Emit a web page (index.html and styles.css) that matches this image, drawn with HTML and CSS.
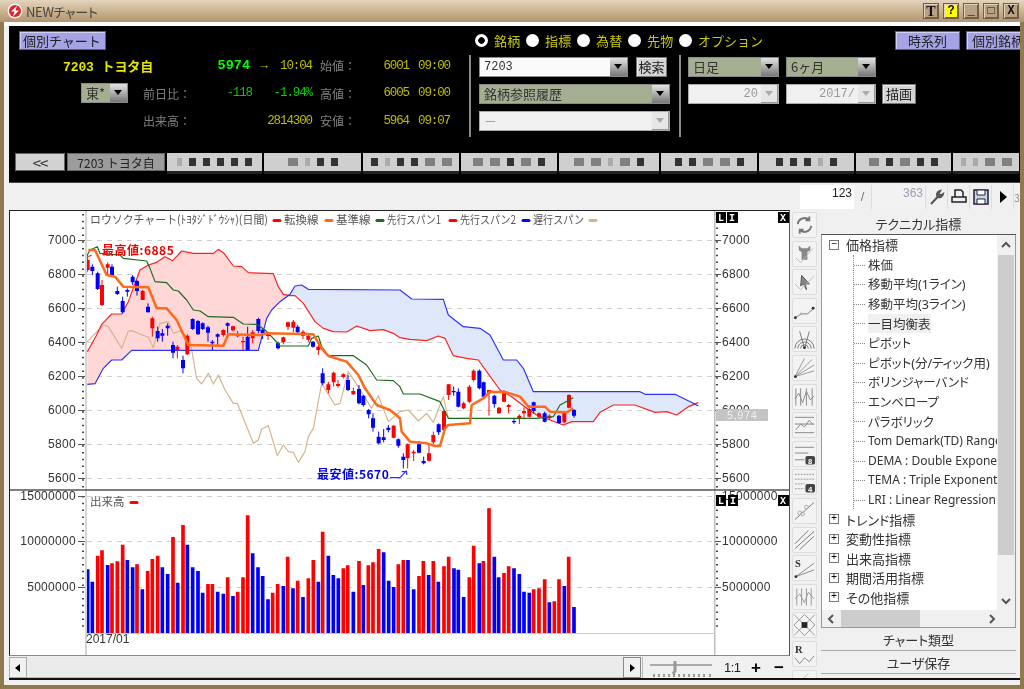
FILE: index.html
```html
<!DOCTYPE html>
<html lang="ja">
<head>
<meta charset="utf-8">
<title>NEWチャート</title>
<link rel="stylesheet" href="styles.css">
</head>
<body>
<div class="window">
  <header class="titlebar">
    <svg class="appicon" width="16" height="16" viewBox="0 0 16 16"><circle cx="8" cy="8" r="7.5" fill="#f4f4f4"/><circle cx="8" cy="8" r="6" fill="#e8202c"/><path d="M10 2.5 4 8.5h3.5L6 13.500l6-6H8.500z" fill="#fff"/></svg>
    <span class="wintitle">NEWチャート</span>
    <div class="winbtns">
      <button class="wb wb-t">T</button><button class="wb wb-help">?</button><button class="wb wb-gap">_</button><button class="wb wb-gap">□</button><button class="wb wb-gap">X</button>
    </div>
  </header>
  <div class="client">
    <section class="band">
      <div class="head">
        <button class="lav lav-main">個別チャート</button>
        <div class="radios">
          <span class="radio on"></span><span class="rlabel">銘柄</span>
          <span class="radio"></span><span class="rlabel">指標</span>
          <span class="radio"></span><span class="rlabel">為替</span>
          <span class="radio"></span><span class="rlabel">先物</span>
          <span class="radio"></span><span class="rlabel">オプション</span>
        </div>
        <button class="lav lav-a">時系列</button>
        <button class="lav lav-b">個別銘柄</button>
      </div>
      <div class="controls">
        <div class="info">
          <div class="name">7203 トヨタ自</div>
          <div class="num now">5974</div>
          <div class="num time"><span class="arrow">→</span>10:04</div>
          <div class="lbl">始値：</div><div class="num">6001</div><div class="num">09:00</div>

          <div class="mkt"><div class="combo sage mini"><span class="ctext">東*</span><span class="carrow"></span></div></div>
          <div class="lbl lbl-b">前日比：</div>
          <div class="num up">-118</div>
          <div class="num up">-1.94%</div>
          <div class="lbl">高値：</div><div class="num">6005</div><div class="num">09:00</div>

          <div></div>
          <div class="lbl lbl-b">出来高：</div>
          <div></div>
          <div class="num">2814300</div>
          <div class="lbl">安値：</div><div class="num">5964</div><div class="num">09:07</div>
        </div>
        <div class="vrule"></div>
        <div class="mid">
          <div class="crow">
            <div class="combo white w149"><span class="ctext">7203</span><span class="carrow"></span></div>
            <button class="gbtn w31">検索</button>
          </div>
          <div class="combo sage w191"><span class="ctext">銘柄参照履歴</span><span class="carrow"></span></div>
          <div class="combo off w191"><span class="ctext">－</span><span class="carrow dim"></span></div>
        </div>
        <div class="vrule"></div>
        <div class="right">
          <div class="crow">
            <div class="combo sage w91"><span class="ctext">日足</span><span class="carrow"></span></div>
            <div class="combo sage w90"><span class="ctext">6ヶ月</span><span class="carrow"></span></div>
          </div>
          <div class="crow">
            <div class="combo off w91 tright"><span class="ctext">20</span><span class="carrow dim"></span></div>
            <div class="combo off w90 tright"><span class="ctext">2017/</span><span class="carrow dim"></span></div>
            <button class="gbtn w34">描画</button>
          </div>
        </div>
      </div>
      <nav class="tabs">
        <div class="tab t-back">&lt;&lt;</div>
        <div class="tab t-cur">7203 トヨタ自</div>
        <div class="tab w95"><i class="pl"></i><i class="pk"></i><i class="pk"></i><i class="pk"></i><i class="pk"></i><i class="pk"></i></div>
        <div class="tab w97"><i class="pm"></i><i class="pl"></i><i class="pk"></i><i class="pk"></i></div>
        <div class="tab w96"><i class="pk"></i><i class="pl"></i><i class="pk"></i><i class="pk"></i><i class="pm"></i><i class="pm"></i></div>
        <div class="tab w96"><i class="pm"></i><i class="pm"></i><i class="pk"></i><i class="pm"></i><i class="pk"></i></div>
        <div class="tab w100"><i class="pm"></i><i class="pm"></i><i class="pl"></i><i class="pm"></i><i class="pk"></i></div>
        <div class="tab w96"><i class="pk"></i><i class="pk"></i><i class="pm"></i><i class="pm"></i><i class="pk"></i></div>
        <div class="tab w95"><i class="pk"></i><i class="pk"></i><i class="pk"></i><i class="pl"></i><i class="pk"></i></div>
        <div class="tab w95"><i class="pm"></i><i class="pk"></i><i class="pm"></i><i class="pk"></i><i class="pk"></i></div>
        <div class="tab w66"><i class="pl"></i><i class="pl"></i><i class="pm"></i><i class="pm"></i></div>
      </nav>
    </section>

    <div class="toolbar">
      <div class="field cur">123</div>
      <div class="slash">/</div>
      <div class="field tot">363</div>
      <button class="tb"><svg width="18" height="18" viewBox="0 0 18 18"><path d="M3 16 10 8.500M9.500 9a4 4 0 0 1 2.500-6l-1.500 2.500 2 2L15 6a4 4 0 0 1-5.500 3z" fill="#666" stroke="#555" stroke-width="2"/></svg></button>
      <button class="tb"><svg width="18" height="18" viewBox="0 0 18 18"><path d="M5 9V2h6l2 2v5M2 9h14v5H2z" fill="none" stroke="#222" stroke-width="1.500"/></svg></button>
      <button class="tb"><svg width="18" height="18" viewBox="0 0 18 18"><path d="M2 2h14v14H2z" fill="#c6d3ea" stroke="#223" stroke-width="1.500"/><path d="M5 2h8v5H5zM5 11h8v5H5z" fill="#fff" stroke="#223"/></svg></button>
      <button class="tb"><svg width="18" height="18" viewBox="0 0 18 18"><path d="M6 3l7 6-7 6z" fill="#000"/></svg></button>
      <button class="tb tb-stub">3</button>
    </div>

    <main class="main">
      <div class="chartcol">
        <div class="chart">
          <svg class="chartsvg" width="781" height="446" viewBox="9 210 781 446">
            <rect x="9" y="210" width="781" height="446" fill="#fff"/>
            <g class="grid">
              <path d="M87 240.500H714M87 274.500H714M87 308.500H714M87 342.500H714M87 376.500H714M87 410.500H714M87 444.500H714M87 478.500H714M87 496.500H714M87 541.500H714M87 587.500H714"/>
            </g>

            <g transform="translate(0 205) scale(.33333)">
              <path class="fillpink" d="M262 440 290 390 305 358 335 327 365 327 385 290 420 195 445 180 470 172 495 155 518 167 545 138 580 145 640 145 655 133 672 145 700 183 725 185 745 203 820 206 835 245 850 268 870 272 840 290 815 315 800 340 775 436 395 436 365 465 335 465 310 490 285 536 262 538z"/>
              <path class="fillblue" d="M870 270 885 243 905 240 925 253 1200 255 1235 282 1330 283 1345 330 1390 365 1440 370 1470 390 1510 465 1550 465 1570 490 1600 560 1920 560 1935 568 2025 568 2080 595 2095 603 2065 605 2030 630 2000 620 1965 622 1905 600 1840 600 1800 622 1780 650 1715 650 1690 660 1650 645 1610 630 1580 610 1535 575 1500 555 1460 500 1435 465 1400 460 1360 452 1335 400 1315 393 1280 407 1230 403 1200 398 1180 385 1150 374 1110 377 1070 363 1040 381 1000 380 970 370 945 350 910 295 885 272z"/>
              <path class="ln tan" d="M262 410 310 360 325 365 365 430 385 378 395 377 445 397 460 428 480 355 505 350 520 385 540 378 570 405 590 520 605 537 625 505 640 537 655 510 675 555 700 595 712 595 760 715 775 705 785 672 805 662 832 752 850 720 865 740 880 742 895 772 915 740 925 695 940 670 965 535 1005 600 1020 595 1045 500 1090 570 1115 610 1135 572 1165 650 1200 620 1225 615 1255 648 1280 625 1300 652 1330 575 1345 640"/>
              <path class="ln red" d="M262 440 290 390 305 358 335 327 365 327 385 290 420 195 445 180 470 172 495 155 518 167 545 138 580 145 640 145 655 133 672 145 700 183 725 185 745 203 820 206 835 245 850 268 870 272 885 272 910 295 945 350 970 370 1000 380 1040 381 1070 363 1110 377 1150 374 1180 385 1200 398 1230 403 1280 407 1315 393 1335 400 1360 452 1400 460 1435 465 1460 500 1500 555 1535 575 1580 610 1610 630 1650 645 1690 660 1715 650 1780 650 1800 622 1840 600 1905 600 1965 622 2000 620 2030 630 2065 605 2095 593"/>
              <path class="ln blue" d="M262 538 285 536 310 490 335 465 365 465 395 436 775 436 800 340 815 315 840 290 870 268 885 243 905 240 925 253 1200 255 1235 282 1330 283 1345 330 1390 365 1440 370 1470 390 1510 465 1550 465 1570 490 1600 560 1920 560 1935 568 2025 568 2080 595 2095 603"/>
              <path class="wick redw" d="M263 150V200M306 225V303M323 172V210M428 255V285M457 335V395M532 420V460M562 388V450M670 373V395M699 362V380M713 378V397M729 395V435M758 375V415M804 380V405M850 395V418M864 350V375M880 345V382M909 375V402M925 385V410M955 420V450M985 530V565M1001 500V545M1014 525V548M1030 505V520M1060 548V570M1181 660V700M1223 715V790M1241 735V768M1287 720V770M1300 680V718M1332 615V680M1346 537V585M1391 590V613M1408 540V595M1421 493V530M1467 555V632M1497 605V627M1512 555V592M1526 597V625M1558 628V657M1572 607V640M1588 600V638M1617 622V640M1648 628V645M1693 620V655M1707 568V610"/>
              <path class="wick bluew" d="M277 178V210M293 200V255M336 178V215M352 245V270M368 275V325M382 250V275M398 210V240M411 225V272M444 295V322M473 365V410M487 372V410M503 355V392M519 410V460M549 452V505M578 340V375M594 345V390M608 352V375M624 362V410M637 405V435M653 385V420M683 352V385M743 365V435M775 338V385M788 370V402M834 410V433M893 360V385M939 408V428M968 490V540M1044 510V558M1077 540V598M1090 570V605M1106 612V640M1119 625V680M1136 680V718M1151 672V712M1165 660V682M1195 700V728M1210 745V790M1257 708V745M1271 755V778M1316 655V690M1361 545V572M1375 550V607M1438 493V553M1451 530V578M1483 570V608M1542 640V657M1601 590V625M1634 620V652M1677 630V656M1722 612V638"/>
              <path class="body redw" d="M263 165V195M306 240V300M323 178V188M428 258V285M457 340V370M532 425V435M562 392V448M670 375V390M699 364V376M713 390V394M729 408V412M758 382V400M804 388V393M850 397V412M864 352V365M880 350V368M909 380V392M925 392V404M955 425V435M985 538V555M1001 503V532M1014 537V543M1030 508V516M1060 558V568M1181 662V698M1223 718V760M1241 740V745M1287 745V767M1300 690V712M1332 618V675M1346 538V570M1391 595V610M1408 545V590M1421 497V525M1467 555V565M1497 608V625M1512 565V590M1526 600V606M1558 632V640M1572 618V625M1588 612V635M1617 625V635M1648 632V640M1693 622V652M1707 570V608"/>
              <path class="body bluew" d="M277 185V198M293 205V252M336 185V212M352 258V267M368 288V322M382 255V260M398 215V232M411 228V258M444 305V322M473 378V400M487 385V392M503 362V370M519 420V443M549 465V490M578 342V372M594 348V388M608 355V372M624 367V383M637 410V415M653 388V395M683 355V362M743 395V435M775 342V378M788 374V385M834 415V430M893 365V382M939 410V425M968 505V535M1044 525V555M1077 552V595M1090 572V600M1106 615V628M1119 640V668M1136 695V715M1151 697V705M1165 668V675M1195 703V722M1210 755V765M1257 718V743M1271 768V775M1316 658V682M1361 558V562M1375 560V605M1438 497V550M1451 532V575M1483 572V597M1542 648V652M1601 592V618M1634 625V650M1677 632V654M1722 615V632"/>
              <path class="ln green" d="M262 150 270 135 292 125 300 145 360 150 370 160 440 168 450 190 465 230 500 233 520 255 535 258 560 285 580 315 600 318 625 335 700 337 730 357 770 358 795 375 815 395 840 423 925 423 935 400 955 393 965 425 985 452 1060 452 1100 480 1130 525 1180 527 1200 545 1210 567 1260 567 1320 590 1345 640 1610 640 1660 635 1680 600 1720 578"/>
              <path class="ln orange" d="M265 135 285 135 320 210 345 215 370 245 445 247 470 310 500 310 530 345 565 420 670 422 685 388 780 390 800 385 940 388 965 430 985 453 1040 470 1075 510 1095 550 1130 600 1170 615 1200 640 1205 680 1230 710 1280 715 1305 723 1320 723 1335 670 1345 660 1410 655 1415 600 1450 580 1470 560 1520 562 1560 575 1585 605 1635 605 1650 620 1700 622 1720 610"/>
              <path class="ln red" d="M265 155 275 150"/>
              <path class="ln blue" d="M1170 818H1200L1220 797M1205 800H1220V810"/>
            </g>

            <g transform="translate(0 485) scale(.33333)">
              <path class="vol redw" d="M293 445V212M306 445V196M336 445V235M352 445V229M368 445V179M411 445V238M443 445V258M457 445V222M473 445V212M519 445V156M549 445V120M624 445V297M637 445V297M683 445V277M713 445V320M729 445V277M743 445V91M818 445V323M833 445V297M863 445V215M893 445V287M925 445V280M940 445V225M968 445V140M1030 445V250M1043 445V241M1077 445V228M1105 445V241M1119 445V232M1136 445V192M1195 445V238M1210 445V225M1257 445V273M1270 445V228M1300 445V228M1332 445V244M1346 445V215M1408 445V277M1421 445V182M1450 445V228M1467 445V70M1512 445V264M1526 445V244M1601 445V313M1617 445V310M1634 445V283M1663 445V349M1677 445V283M1706 445V215"/>
              <path class="vol bluew" d="M263 445V253M277 445V290M323 445V240M382 445V225M398 445V247M427 445V313M487 445V247M503 445V267M533 445V293M562 445V179M578 445V247M594 445V258M608 445V323M653 445V320M670 445V326M699 445V333M758 445V205M774 445V247M788 445V273M804 445V343M850 445V303M879 445V310M909 445V336M955 445V290M985 445V212M1000 445V270M1015 445V280M1060 445V320M1090 445V300M1151 445V202M1166 445V287M1181 445V306M1224 445V225M1241 445V313M1286 445V270M1315 445V290M1362 445V250M1375 445V254M1391 445V336M1438 445V235M1483 445V215M1496 445V277M1542 445V250M1558 445V267M1572 445V320M1588 445V323M1648 445V352M1693 445V303M1722 445V366"/>
            </g>

            <rect x="85" y="210" width="2" height="445" fill="#d4d4d4"/>
            <rect x="714" y="210" width="1.500" height="445" fill="#bdbdbd"/>
            <path d="M86 633.500H714" stroke="#ccc" fill="none"/>
            <path class="minor" d="M83 214V490"/>
            <path class="minor" d="M717 214V490"/>
            <path class="minor" d="M83 496V630"/>
            <path class="minor" d="M717 496V630"/>
            <path class="major" d="M78 240.500h7M78 274.500h7M78 308.500h7M78 342.500h7M78 376.500h7M78 410.500h7M78 444.500h7M78 478.500h7M78 496.500h7M78 541.500h7M78 587.500h7M715 240.500h6M715 274.500h6M715 308.500h6M715 342.500h6M715 376.500h6M715 410.500h6M715 444.500h6M715 478.500h6M715 541.500h6M715 587.500h6"/>

            <g class="axl">
              <text x="76" y="244">7000</text><text x="76" y="278">6800</text><text x="76" y="312">6600</text><text x="76" y="346">6400</text><text x="76" y="380">6200</text><text x="76" y="414">6000</text><text x="76" y="448">5800</text><text x="76" y="482">5600</text>
              <text x="76" y="500">15000000</text><text x="76" y="545">10000000</text><text x="76" y="591">5000000</text>
            </g>
            <g class="axr">
              <text x="722" y="244">7000</text><text x="722" y="278">6800</text><text x="722" y="312">6600</text><text x="722" y="346">6400</text><text x="722" y="380">6200</text><text x="722" y="414">6000</text><text x="722" y="448">5800</text><text x="722" y="482">5600</text>
              <text x="722" y="500">15000000</text><text x="722" y="545">10000000</text><text x="722" y="591">5000000</text>
            </g>
            <rect x="716" y="409" width="52" height="12" fill="#c4c4c4"/>
            <text class="lastp" x="727" y="419">5,974</text>

            <g class="leg">
              <text x="90" y="224" textLength="178" lengthAdjust="spacingAndGlyphs">ロウソクチャート(ﾄﾖﾀｼﾞﾄﾞｳｼｬ)(日間)</text>
              <text x="284" y="224">転換線</text>
              <text x="336" y="224">基準線</text>
              <text x="387" y="224" textLength="54" lengthAdjust="spacingAndGlyphs">先行スパン1</text>
              <text x="460" y="224" textLength="56" lengthAdjust="spacingAndGlyphs">先行スパン2</text>
              <text x="533" y="224" textLength="51" lengthAdjust="spacingAndGlyphs">遅行スパン</text>
              <text x="90" y="506">出来高</text>
            </g>
            <g class="dash">
              <path class="dred" d="M274 220.500h6"/><path class="dora" d="M326 220.500h6"/><path class="dgre" d="M377 220.500h6"/><path class="dred" d="M450 220.500h6"/><path class="dblu" d="M523 220.500h6"/><path class="dtan" d="M590 220.500h6"/><path class="dred" d="M131 502.500h6"/>
            </g>
            <text class="hi" x="102" y="255">最高値:6885</text>
            <text class="lo" x="317" y="479">最安値:5670</text>
            <text class="date" x="86" y="643">2017/01</text>

            <g class="badge">
              <rect x="716" y="212" width="10" height="11"/><rect x="727" y="212" width="11" height="11"/><rect x="778" y="212" width="11" height="11"/>
              <rect x="716" y="495" width="10" height="11"/><rect x="728" y="495" width="10" height="11"/><rect x="778" y="495" width="11" height="11"/>
            </g>
            <g class="badgetx">
              <text x="721" y="221">L</text><text x="732" y="221">I</text><text x="783" y="221">X</text>
              <text x="721" y="504">L</text><text x="733" y="504">I</text><text x="783" y="504">X</text>
            </g>
            <path d="M9 490H790" stroke="#555" stroke-width="1.500"/>
          </svg>
        </div>
        <div class="hbar">
          <button class="sb"><svg width="8" height="10" viewBox="0 0 8 10"><path d="M6 1 1 5l5 4z" fill="#000"/></svg></button>
          <div class="track"></div>
          <button class="sb sb-r"><svg width="8" height="10" viewBox="0 0 8 10"><path d="M2 1l5 4-5 4z" fill="#000"/></svg></button>
          <div class="zoomer">
            <svg width="72" height="20" viewBox="0 0 72 20"><path d="M5 7h62" stroke="#aaa" stroke-width="2"/><path d="M30 3v10l-2 3" stroke="#999" stroke-width="3" fill="none"/><path d="M9 16v3M14 16v3M19 16v3M24 16v3M29 16v3M34 16v3M39 16v3M44 16v3M49 16v3M54 16v3M59 16v3M65 16v3" stroke="#444"/></svg>
          </div>
          <span class="ratio">1:1</span>
          <span class="pm-btn">+</span>
          <span class="pm-btn minus">−</span>
        </div>
      </div>

      <aside class="tools">
        <button class="ic"><svg viewBox="0 0 24 24"><path d="M5 11a7 7 0 0 1 12-4M19 13a7 7 0 0 1-12 4M17 3v4h-4M7 21v-4h4" fill="none" stroke="#777" stroke-width="2"/></svg></button>
        <button class="ic"><svg viewBox="0 0 24 24"><path d="M6 3v5l3 2v8h6v-8l3-2V3l-3 3h-6z" fill="#888"/><path d="M3 16l5 5 13-15" fill="none" stroke="#bbb"/></svg></button>
        <button class="ic"><svg viewBox="0 0 24 24"><path d="M9 5l8 9-4 0 1 6-3-6-3 2z" fill="#888" stroke="#555"/><path d="M2 14l6 6 14-14" fill="none" stroke="#bbb"/></svg></button>
        <button class="ic"><svg viewBox="0 0 24 24"><path d="M2 19l7-4 6 0 7-6" fill="none" stroke="#777"/><circle cx="2.500" cy="19" r="1.500" fill="#333"/><circle cx="21" cy="9" r="1.500" fill="#333"/><path d="M5 18l4-5" stroke="#bbb"/></svg></button>
        <button class="ic"><svg viewBox="0 0 24 24"><path d="M2 22a10 10 0 0 1 20 0M5 22a7 7 0 0 1 14 0M8 22a4 4 0 0 1 8 0M12 22 7 4M12 22l5-18" fill="none" stroke="#777"/><circle cx="12" cy="21" r="1.500" fill="#333"/></svg></button>
        <button class="ic"><svg viewBox="0 0 24 24"><path d="M2 21 20 3M2 21 22 9M2 21 22 15M2 21 12 2" fill="none" stroke="#999"/><circle cx="2.500" cy="21" r="1.500" fill="#333"/></svg></button>
        <button class="ic"><svg viewBox="0 0 24 24"><path d="M3 3v18M8 3v18M14 3v18M20 3v18M2 14l4-6 4 10 4-12 4 9 4-4" fill="none" stroke="#888"/></svg></button>
        <button class="ic"><svg viewBox="0 0 24 24"><path d="M2 4h20M2 11h20M2 20h20M3 17l5-6 4 3 5-7 4 5" fill="none" stroke="#888"/></svg></button>
        <button class="ic"><svg viewBox="0 0 24 24"><path d="M2 5h20M2 11h14M2 18h10" fill="none" stroke="#888"/><rect x="13" y="14" width="10" height="9" rx="2" fill="#444"/><text class="ictx" x="18" y="22">8</text></svg></button>
        <button class="ic"><svg viewBox="0 0 24 24"><path d="M2 4h20M2 9h20M2 14h10M2 19h10" fill="none" stroke="#999" stroke-dasharray="2 1"/><rect x="13" y="14" width="10" height="9" rx="2" fill="#444"/><text class="ictx" x="18" y="22">4</text></svg></button>
        <button class="ic"><svg viewBox="0 0 24 24"><path d="M2 21 22 3" stroke="#777" fill="none"/><circle cx="7" cy="14" r="2" fill="none" stroke="#aaa"/><circle cx="14" cy="8" r="2" fill="none" stroke="#aaa"/><circle cx="10" cy="15" r="2" fill="none" stroke="#aaa"/></svg></button>
        <button class="ic"><svg viewBox="0 0 24 24"><path d="M2 16 16 2M2 21 22 3M7 22 22 8" stroke="#777" fill="none"/></svg></button>
        <button class="ic"><svg viewBox="0 0 24 24"><text class="icS" x="2" y="11">S</text><path d="M3 21 22 7M3 21 22 14" stroke="#888" fill="none"/><circle cx="3" cy="21" r="1.500" fill="#333"/></svg></button>
        <button class="ic"><svg viewBox="0 0 24 24"><path d="M4 3v18M9 3v18M14 3v18M19 3v18M2 14l5-5 5 9 4-11 6 7" fill="none" stroke="#999"/></svg></button>
        <button class="ic"><svg viewBox="0 0 24 24"><path d="M12 1 23 12 12 23 1 12zM1 1l22 22M23 1 1 23" fill="none" stroke="#999"/><rect x="9" y="9" width="6" height="6" fill="#222"/></svg></button>
        <button class="ic"><svg viewBox="0 0 24 24"><text class="icS" x="2" y="11">R</text><path d="M2 16l5 6 5-6 5 4 5-6" stroke="#888" fill="none"/></svg></button>
        <button class="ic"><svg viewBox="0 0 24 24"><path d="M2 16 16 2M7 22 22 8" stroke="#bbb" fill="none"/></svg></button>
      </aside>

      <aside class="side">
        <button class="sidehd">テクニカル指標</button>
        <div class="treebox">
          <div class="treeview">
            <div class="tree">
              <div class="node"><span class="exp">−</span><span class="ntext">価格指標</span></div>
              <div class="kids">
                <div class="leaf"><span>株価</span></div>
                <div class="leaf"><span>移動平均(1ライン)</span></div>
                <div class="leaf"><span>移動平均(3ライン)</span></div>
                <div class="leaf sel"><span>一目均衡表</span></div>
                <div class="leaf"><span>ピボット</span></div>
                <div class="leaf"><span>ピボット(分/ティック用)</span></div>
                <div class="leaf"><span>ボリンジャーバンド</span></div>
                <div class="leaf"><span>エンベロープ</span></div>
                <div class="leaf"><span>パラボリック</span></div>
                <div class="leaf lat"><span>Tom Demark(TD) Range</span></div>
                <div class="leaf lat"><span>DEMA : Double Exponential</span></div>
                <div class="leaf lat"><span>TEMA : Triple Exponential</span></div>
                <div class="leaf lat"><span>LRI : Linear Regression</span></div>
              </div>
              <div class="node"><span class="exp">+</span><span class="ntext">トレンド指標</span></div>
              <div class="node"><span class="exp">+</span><span class="ntext">変動性指標</span></div>
              <div class="node"><span class="exp">+</span><span class="ntext">出来高指標</span></div>
              <div class="node"><span class="exp">+</span><span class="ntext">期間活用指標</span></div>
              <div class="node"><span class="exp">+</span><span class="ntext">その他指標</span></div>
            </div>
            <div class="vscroll">
              <svg class="chev" width="12" height="10" viewBox="0 0 12 10"><path d="M2 7l4-4 4 4" fill="none" stroke="#555" stroke-width="2"/></svg>
              <div class="vthumb"></div>
              <svg class="chev chev-d" width="12" height="10" viewBox="0 0 12 10"><path d="M2 3l4 4 4-4" fill="none" stroke="#555" stroke-width="2"/></svg>
            </div>
          </div>
          <div class="hscroll">
            <svg width="12" height="12" viewBox="0 0 12 12"><path d="M8 2 4 6l4 4" fill="none" stroke="#555" stroke-width="2"/></svg>
            <div class="hthumb"></div>
            <svg class="chev-r" width="12" height="12" viewBox="0 0 12 12"><path d="M4 2l4 4-4 4" fill="none" stroke="#555" stroke-width="2"/></svg>
          </div>
        </div>
        <button class="sidebtn">チャート類型</button>
        <button class="sidebtn">ユーザ保存</button>
      </aside>
    </main>
    <div class="blackline"></div>
  </div>
</div>
</body>
</html>
```
FILE: styles.css
```css
* { box-sizing: border-box; }
html, body { margin: 0; padding: 0; background: #f0f0f0; }
body { font-family: "Noto Sans CJK JP", "Liberation Sans", sans-serif; }
button { font: inherit; margin: 0; padding: 0; }

.window { width: 1024px; height: 689px; display: flex; flex-direction: column; overflow: hidden; filter: blur(.4px); }

/* title bar */
.titlebar { height: 22px; flex: none; display: flex; align-items: center; padding: 0 5px 0 7px; background: linear-gradient(#e4d5bc, #c9b08c 55%, #b09570); }
.appicon { flex: none; }
.wintitle { margin-left: 3px; font-size: 13px; color: #444; font-feature-settings: "palt"; letter-spacing: -.3px; }
.winbtns { margin-left: auto; display: flex; }
.wb { width: 16px; height: 16px; margin-left: 4px; border: 1px solid #6f5f48; background: #b8a282; color: #111; font: bold 12px/13px "Liberation Mono", monospace; box-shadow: inset 1px 1px 0 #e0d2bc, inset -1px -1px 0 #6f5f48; }
.wb-t { font-family: "Liberation Serif", serif; font-size: 14px; }
.wb-help { background: #ff0; }
.wb-gap { margin-left: 4px; }

/* client frame */
.client { flex: 1; min-height: 0; display: flex; flex-direction: column; padding: 4px 0 5px 5px; background: #f0f0f0; border: 4px solid #8f7a50; border-top: 0; box-shadow: inset 0 4px 0 #fff; }

/* black band */
.band { flex: none; height: 157px; background: #000; overflow: hidden; padding: 5px 0 0 6px; border-bottom: 1px solid #444; }
.head { display: flex; align-items: flex-start; height: 20px; margin-left: 4px; }
.lav { flex: none; height: 19px; background: #a3a3e6; color: #222; border: 1px solid #5c5c90; box-shadow: inset 1px 1px 0 #d2d2f5; font-size: 13px; line-height: 15px; white-space: nowrap; overflow: hidden; text-align: left; }
.lav-main { width: 87px; padding-left: 3px; }
.lav-a { width: 65px; text-align: center; }
.lav-b { width: 70px; margin-left: 6px; padding-left: 5px; }
.radios { flex: none; width: 420px; margin-left: 369px; display: flex; align-items: center; height: 18px; }
.radio { width: 13px; height: 13px; border-radius: 50%; background: #fff; flex: none; }
.radio.on { background: radial-gradient(circle, #000 0 3px, #fff 3.5px); }
.rlabel { color: #caca00; font-size: 13px; margin: 0 5px 0 6px; width: 27px; white-space: nowrap; letter-spacing: .2px; }
.rlabel:last-child { margin-left: 6px; width: auto; letter-spacing: 0; }

.controls { display: flex; margin-left: 4px; height: 87px; margin-top: 1px; }
.info { width: 450px; flex: none; display: grid; grid-template-columns: 124px 72px 40px 60px 55px 42px 41px; grid-auto-rows: 27.500px; align-items: center; color: #888; }
.name { grid-column: 1 / 3; padding-left: 44px; color: #e6e600; font-weight: 700; font-size: 13px; letter-spacing: -.1px; font-family: "Liberation Mono", "Noto Sans CJK JP", monospace; white-space: nowrap; }
.num { font: 12.500px "Liberation Mono", monospace; color: #bcbc00; text-align: right; padding-right: 3px; white-space: nowrap; letter-spacing: -1.100px; }
.now { color: #00ff00; font-weight: 700; font-size: 13.500px; padding-right: 5px; letter-spacing: 0; }
.up { color: #00d000; padding-right: 3px; }
.arrow { margin-right: 13px; color: #bcbc00; }
.lbl { font-size: 12px; color: #808080; white-space: nowrap; padding-left: 5px; }
.lbl-b { padding-left: 0; }
.mkt { padding-left: 62px; }
.mini { width: 47px; }

.vrule { flex: none; width: 2px; height: 82px; margin-top: 3px; background: #8a8a8a; }
.mid { flex: none; width: 208px; padding: 5px 0 0 8px; display: flex; flex-direction: column; gap: 7px; }
.right { flex: none; padding: 5px 0 0 7px; display: flex; flex-direction: column; gap: 7px; }
.crow { display: flex; gap: 7px; }
.mid .crow { gap: 8px; }

.combo { height: 20px; display: flex; align-items: center; flex: none; border: 1px solid #8a8a8a; font-size: 13px; color: #333; }
.ctext { flex: 1; padding-left: 4px; white-space: nowrap; overflow: hidden; line-height: 18px; }
.carrow { flex: none; width: 17px; height: 18px; background: linear-gradient(#e4e4e4, #777); position: relative; }
.carrow::after { content: ""; position: absolute; left: 4px; top: 6px; border: 4px solid transparent; border-top: 5px solid #000; border-bottom: 0; }
.carrow.dim { background: #e6e6e6; box-shadow: inset -1px -1px 0 #999; }
.carrow.dim::after { border-top-color: #aaa; }
.sage { background: #a4ae90; }
.white { background: #fafafa; font-family: "Liberation Mono", monospace; font-size: 12px; }
.off { background: #f0f0f0; color: #999; border-color: #aaa; }
.tright .ctext { text-align: right; padding-right: 3px; font-family: "Liberation Mono", monospace; font-size: 12px; }
.w149 { width: 149px; } .w191 { width: 191px; } .w91 { width: 91px; } .w90 { width: 90px; }
.gbtn { flex: none; height: 20px; background: #d4d4d4; border: 1px solid #777; box-shadow: inset 1px 1px 0 #eee; font-size: 13px; line-height: 16px; color: #222; }
.w31 { width: 31px; } .w34 { width: 34px; margin-left: -1px; }

.tabs { display: flex; margin-top: 14px; height: 22px; }
.tab { flex: none; height: 18px; display: flex; align-items: center; justify-content: center; gap: 7px; background: #cfcfcf; margin-right: 2px; box-shadow: 0 3px 0 #222; font-size: 12px; color: #333; }
.t-back { width: 50px; margin-right: 2px; box-shadow: none; border: 1px solid #666; background: #d2d2d2; font-size: 15px; letter-spacing: -1px; }
.t-cur { width: 98px; background: #9c9c9c; box-shadow: none; border: 1px solid #666; margin-right: 2px; color: #222; }
.w95 { width: 95px; } .w96 { width: 96px; } .w97 { width: 97px; } .w100 { width: 100px; } .w66 { width: 66px; }
.pk, .pm, .pl { display: block; width: 7px; height: 8px; }
.pk { background: #333; } .pm { background: #808080; width: 10px; } .pl { background: #aaa; width: 5px; }

/* toolbar */
.toolbar { flex: none; height: 27px; display: flex; justify-content: flex-end; align-items: stretch; padding: 2px 0 1px; background: #f0f0f0; }
.field { width: 54px; font: 12px/16px "Liberation Sans", sans-serif; text-align: right; padding-right: 2px; }
.cur { background: #fff; color: #222; }
.tot { background: #f2f2f2; color: #9aa0b4; border-left: 1px solid #ddd; }
.slash { width: 17px; color: #777; font: 13px/24px "Liberation Sans", sans-serif; text-align: center; }
.tb { flex: none; width: 22px; background: #f0f0f0; border: 0; border-left: 1px solid #ddd; display: flex; align-items: center; justify-content: center; }
.tb-stub { width: 7px; font-size: 10px; color: #888; overflow: hidden; }

/* main area */
.main { flex: 1; min-height: 0; display: flex; overflow: hidden; }
.chartcol { flex: none; width: 781px; display: flex; flex-direction: column; }
.chart { flex: none; height: 446px; border: 1px solid #222; border-bottom: 1px solid #888; border-right: 1px solid #555; overflow: hidden; }
.chartsvg { display: block; margin: -1px; }
.hbar { flex: none; height: 21px; margin-top: 1px; display: flex; align-items: center; background: #f0f0f0; }
.sb { flex: none; width: 18px; height: 21px; background: #f0f0f0; border: 1px solid #aaa; display: flex; align-items: center; justify-content: center; }
.track { flex: 1; height: 21px; background: #ebebeb; border-bottom: 1px solid #bbb; }
.sb-r { border-color: #888; }
.zoomer { flex: none; width: 82px; height: 21px; padding: 1px 0 0 2px; border-left: 1px solid #bbb; margin-left: 1px; }
.zoomer svg { display: block; }
.ratio { flex: none; width: 20px; font: 13px "Liberation Sans", sans-serif; color: #222; letter-spacing: -.5px; }
.pm-btn { flex: none; width: 22px; text-align: center; font: bold 17px/19px "Liberation Sans", sans-serif; color: #000; margin-left: 1px; }
.minus { width: 22px; }

.grid path { stroke: #cfcfcf; fill: none; stroke-dasharray: 5 5; }
.fillpink { fill: #ffd7d7; }
.fillblue { fill: #dfe8fa; }
.ln { fill: none; stroke-width: 3.500; stroke-linejoin: round; }
.red { stroke: #ff2020; }
.blue { stroke: #3030ff; }
.green { stroke: #1b6b1b; }
.tan { stroke: #d4b48c; }
.orange { stroke: #ff6a1a; stroke-width: 7.500; }
.wick { fill: none; stroke-width: 3; }
.body { fill: none; stroke-width: 12; }
.vol { fill: none; stroke-width: 11; }
.redw { stroke: #ff0000; }
.bluew { stroke: #0000ff; }
.minor { stroke: #444; stroke-width: 2; stroke-dasharray: 1.500 5.300; fill: none; }
.major { stroke: #555; fill: none; }
.axl text, .axr text { font: 12px "Liberation Sans", sans-serif; fill: #333; letter-spacing: .3px; }
.axl text { text-anchor: end; }
.lastp { font: 11px "Liberation Sans", sans-serif; fill: #eee; letter-spacing: .6px; }
.leg text { font: 11.500px "Noto Sans CJK JP", sans-serif; fill: #555; }
.dash path { fill: none; stroke-width: 3; stroke-linecap: round; }
.dred { stroke: #ff0000; } .dora { stroke: #ff6a1a; } .dgre { stroke: #1b6b1b; } .dblu { stroke: #0000ff; } .dtan { stroke: #d4b48c; }
.hi, .lo { font: 700 12px "Noto Sans CJK JP", sans-serif; letter-spacing: .5px; }
.hi { fill: #f00000; }
.lo { fill: #0000e0; }
.date { font: 12px "Liberation Sans", sans-serif; fill: #333; }
.badge rect { fill: #000; }
.badgetx text { font: bold 10px "Liberation Mono", monospace; fill: #fff; text-anchor: middle; }

/* tools column */
.tools { flex: none; width: 31px; padding: 2px 0 0 2px; display: flex; flex-direction: column; gap: 2.600px; overflow: hidden; background: #f0f0f0; }
.ic { flex: none; width: 25px; height: 26px; background: #f3f3f3; border: 1px solid #ddd; border-radius: 2px; display: block; }
.ic svg { display: block; width: 23px; height: 24px; }
.ictx { font: bold 8px "Liberation Sans", sans-serif; fill: #fff; text-anchor: middle; }
.icS { font: bold 11px "Liberation Serif", serif; fill: #333; }

/* side panel */
.side { flex: none; width: 195px; padding-top: 2px; display: flex; flex-direction: column; }
.sidehd { flex: none; height: 23px; background: #f0f0f0; border: 0; border-bottom: 1px solid #555; font-size: 13px; color: #333; font-feature-settings: "palt"; }
.treebox { flex: none; height: 393px; background: #fff; border: 1px solid #999; border-top: 0; display: flex; flex-direction: column; }
.treeview { flex: 1; min-height: 0; display: flex; }
.tree { width: 175px; flex: none; overflow: hidden; padding-left: 7px; font-size: 13px; color: #333; font-feature-settings: "palt"; }
.node { height: 19.600px; display: flex; align-items: center; white-space: nowrap; }
.exp { flex: none; width: 10px; height: 10px; border: 1px solid #777; color: #000; font: 10px/8px "Liberation Mono", monospace; text-align: center; margin-right: 7px; }
.kids { margin-left: 24px; border-left: 1px dotted #888; }
.leaf { height: 19.600px; display: flex; align-items: center; white-space: nowrap; padding-left: 14px; position: relative; font-size: 12.500px; font-family: "Noto Sans", "Noto Sans CJK JP", sans-serif; }
.lat { font-size: 12px; }
.leaf::before { content: ""; position: absolute; left: 0; top: 10px; width: 11px; border-top: 1px dotted #888; }
.sel span { background: #f0f0f0; }
.vscroll { flex: 1; background: #f0f0f0; display: flex; flex-direction: column; align-items: center; padding-top: 5px; }
.chev { flex: none; }
.vthumb { width: 16px; height: 300px; margin-top: 5px; background: #cdcdcd; flex: none; }
.chev-d { margin-top: auto; margin-bottom: 4px; }
.hscroll { flex: none; height: 17px; background: #f0f0f0; display: flex; align-items: center; padding: 0 4px 0 3px; }
.hthumb { width: 79px; height: 17px; margin-left: 4px; background: #cdcdcd; }
.chev-r { margin-left: auto; margin-right: 13px; }
.sidebtn { flex: none; height: 23px; background: #f0f0f0; border: 0; border-bottom: 1px solid #aaa; font-size: 13px; color: #333; font-feature-settings: "palt"; }

.blackline { flex: none; height: 2px; background: #111; }
```
